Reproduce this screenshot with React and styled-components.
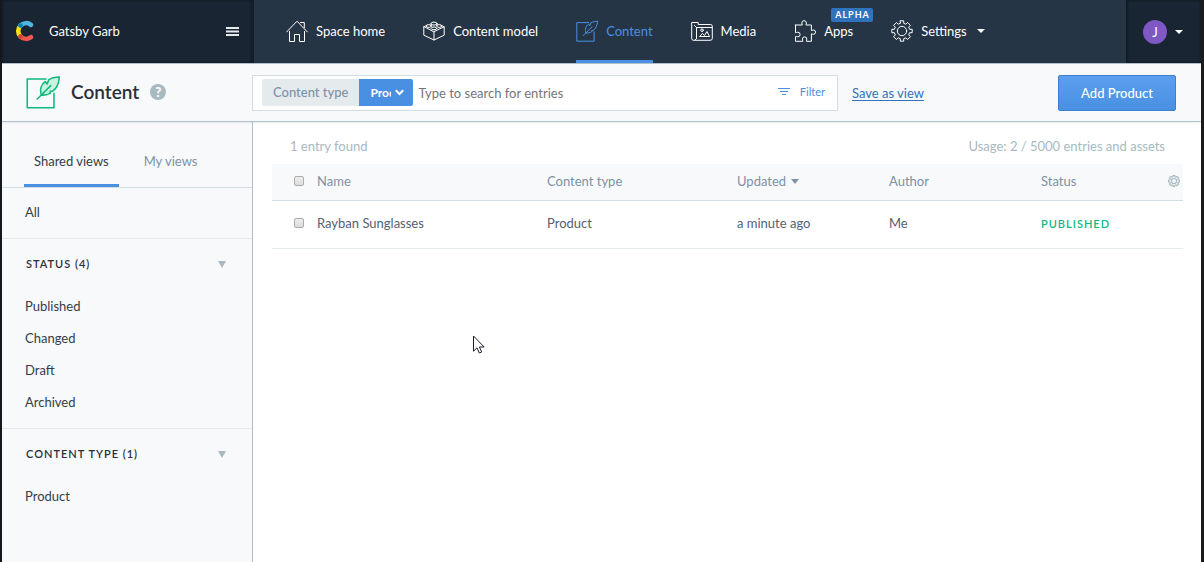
import React from 'react';
import styled, { createGlobalStyle } from 'styled-components';

const GlobalStyle = createGlobalStyle`
  *, *::before, *::after { box-sizing: border-box; }
  html, body, #root { height: 100%; }
  body {
    margin: 0;
    font-family: Lato, "Liberation Sans", sans-serif;
    font-size: 13px;
    line-height: 20px;
    color: #353d48;
    background: #fff;
  }
  button, input, select { font: inherit; margin: 0; }
  ul { list-style: none; margin: 0; padding: 0; }
  svg { display: block; flex: none; }
`;

const Shell = styled.div`
  position: relative;
  display: flex;
  flex-direction: column;
  min-height: 100%;
  border-left: 2px solid #14171c;
  border-right: 3px solid #1b1b1b;
`;

const TopBar = styled.header`
  display: flex;
  height: 64px;
  background: #263545;
  border-bottom: 1px solid #aec1cc;
  color: #fff;
`;

const SpaceSwitcher = styled.button`
  flex: none;
  display: flex;
  align-items: center;
  width: 252px;
  padding: 0 13px 1px;
  border: 0;
  border-right: 2px solid #141f2a;
  background: #192532;
  box-shadow: inset 0 0 3px rgba(0, 0, 0, 0.5);
  color: inherit;
  text-align: left;
  gap: 14px;
`;

const SpaceName = styled.span`
  flex: 1;
`;

const Nav = styled.nav`
  flex: 1;
  display: flex;
  gap: 38px;
  padding: 0 32px;
`;

const NavLink = styled.a`
  position: relative;
  display: flex;
  align-items: center;
  gap: 8px;
  padding-bottom: 1px;
  text-decoration: none;
  white-space: nowrap;
  color: ${(p) => (p.$active ? '#4a90e2' : '#fff')};
  box-shadow: ${(p) => (p.$active ? 'inset 0 -3px 0 #4a90e2' : 'none')};
`;

const Badge = styled.span`
  position: absolute;
  top: 8px;
  left: 37px;
  padding: 0 3px 0 4px;
  border-radius: 2px;
  background: #3072be;
  color: #fff;
  font-size: 9px;
  font-weight: 700;
  line-height: 14px;
  letter-spacing: 1px;
`;

const Caret = styled.span`
  flex: none;
  border: 4px solid transparent;
  border-top: ${(p) => (p.$tall ? 5 : 4)}px solid currentColor;
  border-bottom: 0;
  margin-left: ${(p) => p.$gap || 0}px;
`;

const UserMenu = styled.button`
  flex: none;
  display: flex;
  align-items: center;
  gap: 8px;
  width: 75px;
  padding: 0 16px;
  border: 0;
  border-left: 1px solid #101a24;
  background: #192532;
  box-shadow: inset 0 0 3px rgba(0, 0, 0, 0.5);
  color: #fff;
`;

const Avatar = styled.span`
  width: 24px;
  height: 24px;
  border-radius: 50%;
  background: #7f59c3;
  font-size: 13px;
  line-height: 24px;
  text-align: center;
`;

const PageHeader = styled.div`
  display: flex;
  align-items: center;
  height: 58px;
  padding-right: 25px;
  background: #f7f9fa;
  border-bottom: 1px solid #aec1cc;
  box-shadow: 0 1px 2px rgba(0, 0, 0, 0.08);
  z-index: 1;
`;

const TitleArea = styled.div`
  flex: none;
  display: flex;
  align-items: center;
  gap: 11px;
  width: 250px;
  padding: 0 0 2px 24px;
`;

const Title = styled.h1`
  margin: 0;
  color: #2a3039;
  font-size: 19px;
  font-weight: 600;
  line-height: 24px;
`;

const HelpButton = styled.button`
  width: 16px;
  height: 16px;
  padding: 0;
  border: 0;
  border-radius: 50%;
  background: #a9b9c0;
  color: #fff;
  font-size: 13px;
  font-weight: 900;
  line-height: 16px;
`;

const SearchBox = styled.form`
  flex: 0 1 586px;
  display: flex;
  align-items: center;
  height: 36px;
  padding: 0 12px 0 9px;
  border: 1px solid #d3dce0;
  background: #fff;
`;

const ChipLabel = styled.label`
  flex: none;
  padding: 0 11px;
  border-radius: 2px 0 0 2px;
  background: #e5ebed;
  color: #8091a5;
  font-weight: 500;
  line-height: 27px;
`;

const ChipSelectWrap = styled.span`
  display: grid;
  flex: none;
  align-items: center;
  width: 54px;
  height: 27px;
  border-radius: 0 2px 2px 0;
  background: #4a90e2;
  color: #fff;

  > * { grid-area: 1 / 1; }
  > svg { justify-self: end; margin-right: 9px; pointer-events: none; }
`;

const ChipSelect = styled.select`
  appearance: none;
  width: 100%;
  height: 27px;
  padding: 0 22px 0 11px;
  border: 0;
  background: none;
  color: inherit;
  font-size: 12px;
  font-weight: 700;
`;

const SearchInput = styled.input`
  flex: 1;
  min-width: 0;
  padding: 0 5px;
  border: 0;
  outline: 0;
  background: none;

  &::placeholder { color: #757575; opacity: 1; }
`;

const FilterButton = styled.button`
  display: flex;
  align-items: center;
  gap: 10px;
  padding: 0 0 2px;
  border: 0;
  background: none;
  color: #4a90e2;
  font-size: 11px;
`;

const SaveLink = styled.a`
  margin: 0 auto 0 14px;
  color: #3072be;
  white-space: nowrap;
  text-underline-offset: 2px;
`;

const PrimaryButton = styled.button`
  flex: none;
  width: 118px;
  height: 36px;
  padding: 0;
  border: 1px solid #3c80cf;
  border-radius: 2px;
  background: linear-gradient(#5b9fee, #4a90e2);
  color: #fff;
  font-weight: 500;
`;

const Body = styled.div`
  flex: 1;
  display: flex;
`;

const Sidebar = styled.aside`
  flex: none;
  width: 251px;
  background: #f7f9fa;
  border-right: 1px solid #aec1cc;
`;

const Tabs = styled.div`
  display: flex;
  gap: 15px;
  height: 66px;
  padding: 0 22px;
  border-bottom: 1px solid #d3dce0;
`;

const Tab = styled.button`
  padding: 13px 10px 0;
  border: 0;
  background: none;
  color: ${(p) => (p.$active ? '#353d48' : '#8091a5')};
  box-shadow: ${(p) => (p.$active ? 'inset 0 -3px 0 #4a90e2' : 'none')};
`;

const ViewGroup = styled.section`
  padding-bottom: 10px;
  padding-top: ${(p) => (p.$plain ? 8 : 0)}px;

  & + & { border-top: 1px solid #e5ebed; }
`;

const GroupToggle = styled.button`
  display: flex;
  align-items: center;
  justify-content: space-between;
  width: 100%;
  height: 51px;
  padding: 0 26px 1px 24px;
  border: 0;
  background: none;
  color: #2a3039;
  font-size: 11px;
  font-weight: 600;
  letter-spacing: 1px;
  text-transform: uppercase;
`;

const ViewLink = styled.a`
  display: block;
  padding: 0 23px;
  line-height: 32px;
  color: inherit;
  text-decoration: none;
`;

const Main = styled.main`
  flex: 1;
  min-width: 0;
  padding: 14px 18px 0 19px;
`;

const Summary = styled.div`
  display: flex;
  justify-content: space-between;
  padding: 0 18px 8px 18px;
  color: #a9b9c0;
`;

const EntryTable = styled.table`
  width: 100%;
  table-layout: fixed;
  border-collapse: collapse;
  text-align: left;
`;

const Col = styled.col`
  width: ${(p) => (p.$w ? `${p.$w}px` : 'auto')};
`;

const HeadCell = styled.th`
  height: 36px;
  padding: 0 0 1px;
  background: #f7f9fa;
  border-bottom: 1px solid #d3dce0;
  color: #8091a5;
  font-weight: 400;
`;

const Cell = styled.td`
  height: 48px;
  padding: 0 0 2px;
  border-bottom: 1px solid #e5ebed;
  color: #536171;
`;

const SortButton = styled.button`
  display: flex;
  align-items: center;
  padding: 0;
  border: 0;
  background: none;
  color: inherit;
`;

const IconButton = styled.button`
  display: block;
  padding: 0;
  border: 0;
  background: none;
  margin-left: auto;
  margin-right: 3px;
`;

const Tick = styled.input`
  appearance: none;
  display: block;
  width: 10px;
  height: 10px;
  margin-left: 22px;
  border: 1px solid #adadad;
  border-radius: 2px;
  background: linear-gradient(#eee, #dcdcdc);
`;

const Status = styled.span`
  color: #0eb87f;
  font-size: 11px;
  font-weight: 600;
  letter-spacing: 1px;
  text-transform: uppercase;
`;

const Pointer = styled.svg`
  position: absolute;
  left: 471px;
  top: 335px;
`;

const Line = ({ size = 22, color = 'currentColor', weight = 1, children }) => (
  <svg width={size} height={size} viewBox="0 0 22 22" fill="none" stroke={color} strokeWidth={weight} strokeLinecap="round" strokeLinejoin="round" aria-hidden="true">
    {children}
  </svg>
);

const Logo = () => (
  <svg width="20" height="22" viewBox="0 0 20 22" fill="none" strokeWidth="4.600" strokeLinecap="round" aria-hidden="true">
    <path d="M5.5 5.5A7.8 7.8 0 0 0 5.5 16.5" stroke="#fae501" />
    <path d="M5.5 5.5A8 8 0 0 1 16 4.8" stroke="#4fb5e1" />
    <path d="M5.5 16.5A8 8 0 0 0 16 17.2" stroke="#f05751" />
    <circle cx="5.5" cy="5.5" r="2.300" fill="#0681b6" />
    <circle cx="5.5" cy="16.5" r="2.300" fill="#cd4739" />
  </svg>
);

const HomeIcon = () => (
  <Line>
    <path d="M.6 12 11 1.2 21.4 12M3.5 11.5v10h5v-7h5v7h5v-10M14.5 2.5h3.8v5.2" />
  </Line>
);

const ModelIcon = () => (
  <Line>
    <path d="M.8 6.8v8.4L11 20l10.2-4.8V6.8L11 11.6zM11 11.6V20M.8 6.8 4 5.2M21.2 6.8 18 5.2" />
    <ellipse cx="11" cy="3.6" rx="3" ry="1.5" />
    <path d="M8 3.6v1.8M14 3.6v1.8" />
    <ellipse cx="5.8" cy="6" rx="2.6" ry="1.4" />
    <ellipse cx="16.2" cy="6" rx="2.6" ry="1.4" />
    <ellipse cx="11" cy="8.4" rx="2.8" ry="1.4" />
  </Line>
);

const QuillIcon = ({ size, color, leaf = 'none' }) => (
  <Line size={size} color={color}>
    <path d="M12.900 2.600H.8v18.600h17.300V11.800" />
    <path fill={leaf} d="M10 12.900C8.700 9.500 9.800 6 12.500 4.200L13.600 5.900 14.800 3C16.800 1.700 19 1.400 21.600 1.300 21.300 5 19.800 8.800 17.200 10.500L15.600 10.600 15.800 11.700C14 12.800 11.800 13.200 10 12.900z" />
    <path d="M7.300 15.500 16 6.900" />
  </Line>
);

const MediaIcon = () => (
  <Line>
    <path d="M3.500 20.300H2.500A1.800 1.800 0 0 1 .7 18.500V2.500h6.500v2h12.300a1.800 1.800 0 0 1 1.800 1.800v12.200a1.800 1.800 0 0 1-1.800 1.800z" />
    <path d="M5.500 18.500v-11h15.500M5.500 7.500 3.500 5.500M5.500 18.500 4 20" />
    <path d="M9 16.500h9.500l-2.500-5-2.500 4-1.800-1.800z" />
    <circle cx="11" cy="10.200" r="1.300" />
  </Line>
);

const PuzzleIcon = () => (
  <Line>
    <path d="M2.800 5H8.300C8.300 4.300 7.800 4 7.800 3a2.300 2.300 0 0 1 4.600 0c0 1-.5 1.300-.5 2h5.500v5.500c.7 0 1-.5 2-.5a2 2 0 0 1 0 4.300c-1 0-1.300-.5-2-.5v7.500h-5c0-1 .4-1.200.4-2.200a2.200 2.200 0 0 0-4.400 0c0 1 .4 1.200.4 2.200H1.500V16.500c1 0 1.300.3 2.300.3a2.200 2.200 0 0 0 0-4.600c-1 0-1.300.5-2.300.5V5z" />
  </Line>
);

const GearIcon = ({ size, color, weight }) => (
  <Line size={size} color={color} weight={weight}>
    <circle cx="11" cy="11" r="4.700" />
    <path d="M9.300 .8h3.400v2.500l2.100.9L16.600 2.500 19.400 5.300 17.700 7.100l.9 2.200h2.600v3.400h-2.600l-.9 2.200 1.700 1.800-2.800 2.800-1.800-1.700-2.100.9v2.500H9.300v-2.500l-2.100-.9-1.800 1.700-2.800-2.800 1.700-1.800-.9-2.200H.8V9.300h2.600l.9-2.200L2.600 5.300 5.400 2.500l1.800 1.700 2.100-.9z" />
  </Line>
);

const navItems = [
  { label: 'Space home', icon: <HomeIcon /> },
  { label: 'Content model', icon: <ModelIcon /> },
  { label: 'Content', icon: <QuillIcon />, active: true },
  { label: 'Media', icon: <MediaIcon /> },
  { label: 'Apps', icon: <PuzzleIcon />, badge: 'Alpha' },
  { label: 'Settings', icon: <GearIcon />, menu: true },
];

const viewGroups = [
  { title: 'Status', views: ['Published', 'Changed', 'Draft', 'Archived'] },
  { title: 'Content type', views: ['Product'] },
];

const entries = [
  { name: 'Rayban Sunglasses', type: 'Product', updated: 'a minute ago', author: 'Me', status: 'Published' },
];

export default function App() {
  return (
    <>
      <GlobalStyle />
      <Shell>
        <TopBar>
          <SpaceSwitcher type="button">
            <Logo />
            <SpaceName>Gatsby Garb</SpaceName>
            <svg width="13" height="9" viewBox="0 0 13 9" fill="#e5ebed" aria-hidden="true">
              <path d="M0 0h13v2H0zM0 3.500h13v2H0zM0 7h13v2H0z" />
            </svg>
          </SpaceSwitcher>
          <Nav>
            {navItems.map((item) => (
              <NavLink key={item.label} href="#" $active={item.active}>
                {item.icon}
                {item.label}
                {item.badge && <Badge>{item.badge.toUpperCase()}</Badge>}
                {item.menu && <Caret $gap={2} />}
              </NavLink>
            ))}
          </Nav>
          <UserMenu type="button">
            <Avatar>J</Avatar>
            <Caret />
          </UserMenu>
        </TopBar>

        <PageHeader>
          <TitleArea>
            <QuillIcon size={34} color="#0eb87f" leaf="#c9f3df" />
            <Title>Content</Title>
            <HelpButton type="button">?</HelpButton>
          </TitleArea>
          <SearchBox>
            <ChipLabel htmlFor="content-type">Content type</ChipLabel>
            <ChipSelectWrap>
              <ChipSelect id="content-type" defaultValue="Product">
                <option>Product</option>
              </ChipSelect>
              <svg width="9" height="7" viewBox="0 0 9 7" fill="none" stroke="currentColor" strokeWidth="2" aria-hidden="true">
                <path d="M.8 1.200 4.500 5 8.200 1.200" />
              </svg>
            </ChipSelectWrap>
            <SearchInput type="text" aria-label="Search entries" placeholder="Type to search for entries" />
            <FilterButton type="button">
              <svg width="12" height="8" viewBox="0 0 12 8" fill="currentColor" aria-hidden="true">
                <path d="M0 0h12v1H0zM2 3h8v1H2zM4 6h4v1H4z" />
              </svg>
              Filter
            </FilterButton>
          </SearchBox>
          <SaveLink href="#">Save as view</SaveLink>
          <PrimaryButton type="button">Add Product</PrimaryButton>
        </PageHeader>

        <Body>
          <Sidebar>
            <Tabs>
              <Tab type="button" $active>Shared views</Tab>
              <Tab type="button">My views</Tab>
            </Tabs>
            <ViewGroup $plain>
              <ViewLink href="#">All</ViewLink>
            </ViewGroup>
            {viewGroups.map((group) => (
              <ViewGroup key={group.title}>
                <GroupToggle type="button">
                  {`${group.title} (${group.views.length})`}
                  <svg width="8" height="7" viewBox="0 0 8 7" fill="#a9b9c0" aria-hidden="true">
                    <path d="M0 0h8L4 7z" />
                  </svg>
                </GroupToggle>
                <ul>
                  {group.views.map((view) => (
                    <li key={view}><ViewLink href="#">{view}</ViewLink></li>
                  ))}
                </ul>
              </ViewGroup>
            ))}
          </Sidebar>

          <Main>
            <Summary>
              <span>1 entry found</span>
              <span>Usage: 2 / 5000 entries and assets</span>
            </Summary>
            <EntryTable>
              <colgroup>
                <Col $w={45} />
                <Col />
                <Col $w={190} />
                <Col $w={152} />
                <Col $w={152} />
                <Col $w={120} />
                <Col $w={22} />
              </colgroup>
              <thead>
                <tr>
                  <HeadCell><Tick type="checkbox" aria-label="Select all entries" /></HeadCell>
                  <HeadCell>Name</HeadCell>
                  <HeadCell>Content type</HeadCell>
                  <HeadCell><SortButton type="button">Updated<Caret $tall $gap={5} /></SortButton></HeadCell>
                  <HeadCell>Author</HeadCell>
                  <HeadCell>Status</HeadCell>
                  <HeadCell>
                    <IconButton type="button" aria-label="Configure columns"><GearIcon size={12} color="#a9b9c0" weight={2} /></IconButton>
                  </HeadCell>
                </tr>
              </thead>
              <tbody>
                {entries.map((entry) => (
                  <tr key={entry.name}>
                    <Cell><Tick type="checkbox" aria-label={`Select ${entry.name}`} /></Cell>
                    <Cell>{entry.name}</Cell>
                    <Cell>{entry.type}</Cell>
                    <Cell>{entry.updated}</Cell>
                    <Cell>{entry.author}</Cell>
                    <Cell><Status>{entry.status}</Status></Cell>
                    <Cell />
                  </tr>
                ))}
              </tbody>
            </EntryTable>
          </Main>
        </Body>

        <Pointer width="12" height="19" viewBox="0 0 12 19" fill="#fff" stroke="#1c1c2b" strokeWidth="1" aria-hidden="true">
          <path d="M.5 1v15.200L4 12.800l2.300 5.200 2.400-1-2.300-5h4.800z" />
        </Pointer>
      </Shell>
    </>
  );
}
